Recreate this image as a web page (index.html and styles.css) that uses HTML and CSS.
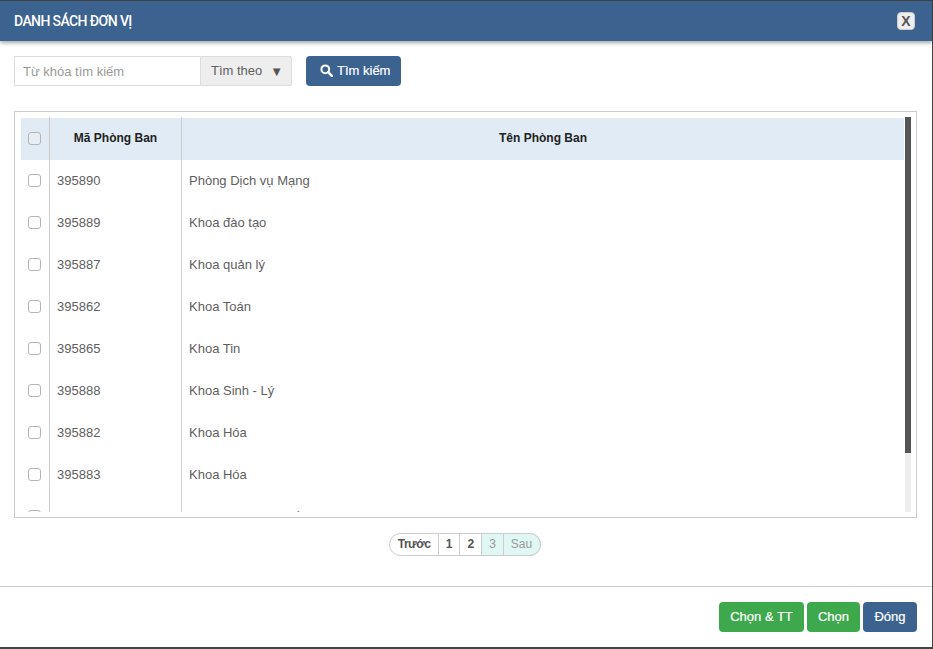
FILE: index.html
```html
<!DOCTYPE html>
<html lang="vi">
<head>
<meta charset="utf-8">
<title>Danh sách đơn vị</title>
<link rel="stylesheet" href="styles.css">
</head>
<body>
<div class="modal">
  <header class="head">
    <h1 class="title">DANH SÁCH ĐƠN VỊ</h1>
    <button class="close">X</button>
  </header>
  <div class="search">
    <input class="kw" placeholder="Từ khóa tìm kiếm">
    <div class="by"><span>Tìm theo</span><span class="arrow">▼</span></div>
    <button class="btn blue find">
      <svg class="ico" viewBox="0 0 13 13"><circle cx="5.3" cy="5.3" r="3.9" fill="none" stroke="#fff" stroke-width="2"/><path d="M8.2 8.2L11.8 11.8" stroke="#fff" stroke-width="2.4" stroke-linecap="round"/></svg>Tìm kiếm
    </button>
  </div>
  <div class="box">
    <div class="scroller">
      <div class="tablewrap">
        <div class="row hd">
          <div class="c0"><span class="cb"></span></div>
          <div class="c1">Mã Phòng Ban</div>
          <div class="c2">Tên Phòng Ban</div>
        </div>
        <div class="row"><div class="c0"><span class="cb"></span></div><div class="c1">395890</div><div class="c2">Phòng Dịch vụ Mạng</div></div>
        <div class="row"><div class="c0"><span class="cb"></span></div><div class="c1">395889</div><div class="c2">Khoa đào tạo</div></div>
        <div class="row"><div class="c0"><span class="cb"></span></div><div class="c1">395887</div><div class="c2">Khoa quản lý</div></div>
        <div class="row"><div class="c0"><span class="cb"></span></div><div class="c1">395862</div><div class="c2">Khoa Toán</div></div>
        <div class="row"><div class="c0"><span class="cb"></span></div><div class="c1">395865</div><div class="c2">Khoa Tin</div></div>
        <div class="row"><div class="c0"><span class="cb"></span></div><div class="c1">395888</div><div class="c2">Khoa Sinh - Lý</div></div>
        <div class="row"><div class="c0"><span class="cb"></span></div><div class="c1">395882</div><div class="c2">Khoa Hóa</div></div>
        <div class="row"><div class="c0"><span class="cb"></span></div><div class="c1">395883</div><div class="c2">Khoa Hóa</div></div>
        <div class="row"><div class="c0"><span class="cb"></span></div><div class="c1">395878</div><div class="c2">Ban quản lý kinh tế</div></div>
      </div>
      <div class="track"><div class="thumb"></div></div>
    </div>
  </div>
  <nav class="pager">
    <span class="pg first strong">Trước</span><span class="pg strong">1</span><span class="pg strong">2</span><span class="pg off">3</span><span class="pg off last">Sau</span>
  </nav>
  <footer class="foot">
    <button class="btn green w1">Chọn &amp; TT</button>
    <button class="btn green w2">Chọn</button>
    <button class="btn blue w3">Đóng</button>
  </footer>
</div>
</body>
</html>
```
FILE: styles.css
```css
* { box-sizing: border-box; }
html, body { margin: 0; height: 649px; overflow: hidden; background: #fff; }
body { font-family: "Liberation Sans", Arial, sans-serif; font-size: 13px; color: #5f5f5f; }
.modal { width: 933px; height: 649px; display: flex; flex-direction: column; border-top: 1px solid #444; border-right: 1px solid #444; border-bottom: 2px solid #444; background: #fff; }
.head { height: 40px; flex: none; background: #3c628f; display: flex; align-items: center; justify-content: space-between; padding: 0 17px 0 14px; box-shadow: 0 2px 4px rgba(0,0,0,.35); position: relative; }
.title { margin: 0; color: #fff; font-family: Roboto, "Liberation Sans", sans-serif; font-size: 14px; font-weight: 500; letter-spacing: -.6px; }
.close { width: 18px; height: 18px; padding: 0; border: 1px solid #ccc; border-radius: 4px; background: #eee; color: #555; font: bold 14px/16px "Liberation Sans", Arial, sans-serif; }
.search { display: flex; align-items: flex-start; padding: 15px 0 0 14px; height: 70px; flex: none; }
.kw { width: 186px; height: 30px; border: 1px solid #ddd; border-right: 0; padding: 0 8px; font: 13px "Liberation Sans", Arial, sans-serif; color: #555; outline: 0; }
.kw::placeholder { color: #999; opacity: 1; }
.by { width: 92px; height: 30px; border: 1px solid #ddd; border-radius: 0 2px 2px 0; background: #eee; display: flex; align-items: center; justify-content: space-between; padding: 0 8px 2px 10px; color: #5f5f5f; }
.arrow { font-size: 13px; color: #555; margin-top: 3px; }
.btn { border: 0; border-radius: 4px; color: #fff; font: 13px "Liberation Sans", Arial, sans-serif; height: 30px; padding: 0 0 2px; -webkit-text-stroke: .2px #fff; }
.blue { background: #3c628f; }
.green { background: #3ea84c; }
.find { width: 95px; margin-left: 14px; display: flex; align-items: center; justify-content: flex-start; gap: 4px; padding: 0 0 2px 14px; }
.ico { width: 13px; height: 13px; }
.box { height: 407px; flex: none; margin: 0 15px 0 14px; border: 1px solid #ccc; padding: 5px 5px 5px 6px; }
.scroller { height: 395px; display: flex; overflow: hidden; }
.tablewrap { width: 883px; height: 395px; flex: none; overflow: hidden; }
.row { height: 42px; display: flex; align-items: stretch; }
.row > div { padding-bottom: 2px; }
.hd { height: 43px; background: linear-gradient(#e0ebf6, #e0ebf6) 0 1px / 100% 42px no-repeat; font-weight: bold; font-size: 12px; color: #222; }
.hd > div { padding-top: 1px; }
.c0 { width: 29px; flex: none; display: flex; align-items: center; padding-left: 7px; border-right: 1px solid #ccc; }
.c1 { width: 132px; flex: none; display: flex; align-items: center; padding-left: 7px; border-right: 1px solid #ccc; }
.c2 { flex: 1; display: flex; align-items: center; padding-left: 7px; }
.hd .c1, .hd .c2 { justify-content: center; padding-left: 0; }
.cb { width: 13px; height: 13px; border: 1px solid #b5b5b5; border-radius: 3px; background: #fff; }
.hd .cb { background: #e9eef4; }
.track { width: 6px; margin-left: 1px; flex: none; background: #eee; }
.thumb { height: 336px; background: #555; }
.pager { height: 69px; flex: none; display: flex; justify-content: center; padding: 15px 2px 0 0; border-bottom: 1px solid #ccc; font-size: 12px; }
.pg { height: 23px; line-height: 21px; padding: 0 7px; border: 1px solid #ccc; border-left: 0; background: #fff; }
.strong { font-weight: bold; color: #555; }
.off { background: #e0f7f3; color: #999; }
.first { border-left: 1px solid #ccc; border-radius: 12px 0 0 12px; width: 50px; padding: 0 0 0 8px; letter-spacing: -.5px; }
.last { border-radius: 0 12px 12px 0; padding: 0 8px 0 7px; }
.foot { flex: 1; display: flex; justify-content: flex-end; align-items: flex-start; gap: 3px; padding: 15px 15px 0 0; }
.w1 { width: 85px; }
.w2 { width: 53px; }
.w3 { width: 54px; }
```
